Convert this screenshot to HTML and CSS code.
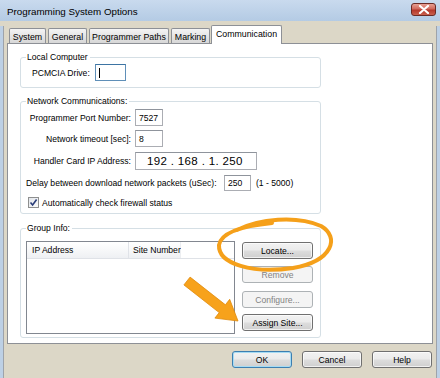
FILE: index.html
```html
<!DOCTYPE html>
<html>
<head>
<meta charset="utf-8">
<link rel="stylesheet" href="styles.css">
</head>
<body>
<div class="window">
  <div class="titlebar">
    <span class="title">Programming System Options</span>
    <span class="close"><svg width="12" height="9" viewBox="0 0 12 9"><path d="M2 1 L10 8 M10 1 L2 8" stroke="#fff" stroke-width="2.2" stroke-linecap="round"/></svg></span>
  </div>
  <div class="frame">
    <div class="tabs">
      <div class="tab">System</div>
      <div class="tab">General</div>
      <div class="tab">Programmer Paths</div>
      <div class="tab">Marking</div>
      <div class="tab active">Communication</div>
    </div>
    <div class="panel">
      <div class="group g-local">
        <div class="legend">Local Computer</div>
        <div class="row local-row">
          <span class="lbl">PCMCIA Drive:</span>
          <span class="input focus pcmcia"><span class="caret"></span></span>
        </div>
      </div>
      <div class="group g-net">
        <div class="legend">Network Communications:</div>
        <div class="netgrid">
          <span class="rlbl">Programmer Port Number:</span><span class="input small">7527</span>
          <span class="rlbl">Network timeout [sec]:</span><span class="input small">8</span>
          <span class="rlbl">Handler Card IP Address:</span><span class="input ip">192 . 168 . 1. 250</span>
        </div>
        <div class="row delay-row">
          <span class="lbl delay-lbl">Delay between download network packets (uSec):</span>
          <span class="input delay">250</span>
          <span class="lbl range">(1 - 5000)</span>
        </div>
        <div class="row check-row">
          <span class="checkbox"><svg width="9" height="9" viewBox="0 0 9 9"><path d="M1.5 4.5 L3.6 7 L7.6 1.5" fill="none" stroke="#2a3d78" stroke-width="1.6"/></svg></span>
          <span class="lbl">Automatically check firewall status</span>
        </div>
      </div>
      <div class="group g-info">
        <div class="legend">Group Info:</div>
        <div class="info-body">
          <div class="list">
            <div class="lhead">
              <span class="col c1">IP Address</span>
              <span class="col c2">Site Number</span>
              <span class="col c3"></span>
            </div>
          </div>
          <div class="side">
            <div class="btn locate">Locate...</div>
            <div class="btn dis remove">Remove</div>
            <div class="btn dis configure">Configure...</div>
            <div class="btn assign">Assign Site...</div>
          </div>
        </div>
      </div>
    </div>
    <div class="footer">
      <div class="btn fbtn default">OK</div>
      <div class="btn fbtn">Cancel</div>
      <div class="btn fbtn">Help</div>
    </div>
  </div>
  <svg class="overlay" width="440" height="378" viewBox="0 0 440 378">
    <path d="M237 230 C259 219, 296 215, 321 226 C340 237, 333 261, 293 268 C253 274, 218 264, 219 245 C221 233, 242 226, 272 223" fill="none" stroke="#f5a01a" stroke-width="4" stroke-linecap="round"/>
    <polygon points="190.1,277.1 225.4,304.8 229.7,299.3 238,321 214.9,318.1 219.2,312.6 183.9,284.9" fill="#f7a21b" stroke="#e08a0c" stroke-width="0.8" stroke-linejoin="round"/>
  </svg>
</div>
</body>
</html>
```
FILE: styles.css
```css
html, body {
  margin: 0;
  padding: 0;
}
body {
  width: 440px;
  height: 378px;
  overflow: hidden;
  font-family: "Liberation Sans", Arial, sans-serif;
  font-size: 8.6px;
  color: #000;
  white-space: nowrap;
}
.window {
  position: relative;
  width: 440px;
  height: 378px;
  background: #dcd7c7;
}
.titlebar {
  height: 21px;
  display: flex;
  align-items: center;
  justify-content: space-between;
  padding: 0 4px 0 7px;
  background: linear-gradient(#c9daee, #b4cbe4);
  box-sizing: border-box;
}
.title {
  font-size: 9.8px;
  color: #000;
  margin-top: 2px;
}
.close {
  width: 25px;
  height: 13px;
  box-sizing: border-box;
  border: 1px solid #6b2a24;
  border-radius: 3px;
  background: linear-gradient(#e8a093 0%, #d0675a 45%, #b5372a 55%, #c9604e 100%);
  display: flex;
  align-items: center;
  justify-content: center;
  margin-top: -2px;
}
.frame {
  height: 357px;
  box-sizing: border-box;
  border-left: 3px solid #bdd0e5;
  border-right: 3px solid #bdd0e5;
  border-bottom: 2px solid #2c8a9c;
  box-shadow: inset 1px 0 0 #9ea3aa, inset -1px 0 0 #9ea3aa;
}
.tabs {
  display: flex;
  align-items: flex-end;
  margin: 5px 0 -1px 6px;
  height: 18px;
}
.tab {
  height: 16px;
  box-sizing: border-box;
  padding: 0;
  margin-right: 2px;
  border: 1px solid #8d9096;
  border-bottom: none;
  border-radius: 2px 2px 0 0;
  background: linear-gradient(#f4f4f4, #e4e4e4 50%, #d5d5d5);
  display: flex;
  align-items: center;
  justify-content: center;
  font-size: 8.8px;
}
.tab:nth-child(1) { width: 37px; }
.tab:nth-child(2) { width: 39px; }
.tab:nth-child(3) { width: 80px; }
.tab:nth-child(4) { width: 39px; margin-right: 1px; }
.tab.active {
  width: 71px;
  height: 19px;
  background: #fff;
  position: relative;
  z-index: 2;
  padding-bottom: 2px;
}
.panel {
  width: 426px;
  height: 301px;
  margin-left: 4px;
  box-sizing: border-box;
  border: 1px solid #8d9096;
  background: #fff;
  padding: 13px 0 0 12px;
  position: relative;
  z-index: 1;
}
.group {
  width: 301px;
  box-sizing: border-box;
  border: 1px solid #d5dfe5;
  border-radius: 3px;
  box-shadow: inset 1px 1px 0 #fff;
}
.legend {
  width: fit-content;
  height: 13px;
  line-height: 13px;
  margin: -7px 0 0 5px;
  padding: 0 2px 0 1px;
  background: #fff;
  color: #000;
}
.g-local { height: 31px; }
.g-net { height: 113px; margin-top: 13px; }
.g-info { height: 110px; margin-top: 14px; }
.row {
  display: flex;
  align-items: center;
}
.local-row {
  padding-left: 11px;
  gap: 5px;
}
.input {
  box-sizing: border-box;
  height: 17px;
  border: 1px solid #abadb3;
  border-top-color: #8f949c;
  background: #fff;
  display: flex;
  align-items: center;
  padding-left: 3px;
}
.input.focus {
  border-color: #5f8fb8;
  border-top-color: #3d74a3;
}
.pcmcia { width: 31px; }
.caret {
  width: 1px;
  height: 10px;
  background: #000;
}
.netgrid {
  display: grid;
  grid-template-columns: 110px auto;
  column-gap: 4px;
  row-gap: 4px;
  margin-top: 1px;
  align-items: center;
}
.rlbl {
  text-align: right;
}
.small { width: 28px; }
.ip {
  width: 122px;
  height: 18px;
  margin-top: 1px;
  font-size: 11.5px;
  padding-left: 11px;
  letter-spacing: 0.35px;
}
.delay-row {
  margin-top: 5px;
  padding-left: 5px;
}
.delay-lbl {
  width: 195px;
}
.delay {
  width: 27px;
  height: 16px;
  margin-left: 3px;
}
.range { margin-left: 5px; }
.check-row {
  margin-top: 6px;
  padding-left: 7px;
  gap: 3px;
}
.checkbox {
  width: 11px;
  height: 11px;
  box-sizing: border-box;
  border: 1px solid #8e8f8f;
  background: linear-gradient(135deg, #e2e5ea, #fbfbfb);
  display: flex;
  align-items: center;
  justify-content: center;
}
.info-body {
  display: flex;
  margin: 6px 0 0 5px;
  align-items: flex-start;
}
.list {
  width: 209px;
  height: 93px;
  box-sizing: border-box;
  border: 1px solid #828790;
  background: #fff;
}
.lhead {
  height: 17px;
  display: flex;
  background: linear-gradient(#ffffff, #f7f8f9 50%, #eef0f3);
  border-bottom: 1px solid #dfe2e7;
  box-sizing: border-box;
}
.col {
  display: flex;
  align-items: center;
  padding-left: 5px;
  box-sizing: border-box;
}
.c1 { width: 102px; border-right: 1px solid #e0e3e8; }
.c2 { width: 52px; border-right: 1px solid #eceef1; padding-left: 4px; }
.c3 { flex: 1; background: #fff; }
.side {
  display: flex;
  flex-direction: column;
  margin-left: 7px;
  margin-top: 1px;
}
.btn {
  width: 71px;
  height: 17px;
  box-sizing: border-box;
  border: 1px solid #707070;
  border-radius: 3px;
  background: linear-gradient(#f2f2f2 0%, #ebebeb 48%, #dddddd 52%, #cfcfcf 100%);
  box-shadow: inset 0 0 0 1px rgba(255,255,255,0.7);
  display: flex;
  align-items: center;
  justify-content: center;
}
.btn.dis {
  border-color: #adb2b5;
  background: #f4f4f4;
  color: #838383;
  box-shadow: none;
}
.remove { margin-top: 7px; }
.configure { margin-top: 8px; }
.assign { margin-top: 6px; }
.footer {
  display: flex;
  justify-content: flex-end;
  gap: 10px;
  margin-top: 7px;
  padding-right: 5px;
}
.fbtn {
  width: 60px;
}
.fbtn.default {
  border-color: #3c7fb1;
  box-shadow: inset 0 0 0 1px #a6dbf3;
}
.overlay {
  position: absolute;
  left: 0;
  top: 0;
  pointer-events: none;
  z-index: 5;
}
```
